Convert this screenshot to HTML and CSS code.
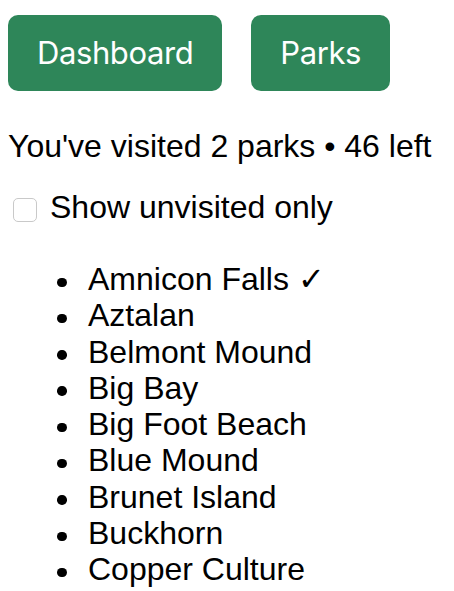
FILE: index.html
```html
<!DOCTYPE html>
<html lang="en">
<head>
<meta charset="utf-8">
<title>Parks</title>
<link rel="stylesheet" href="styles.css">
</head>
<body>
  <nav class="nav">
    <button class="btn" type="button">Dashboard</button>
    <button class="btn" type="button">Parks</button>
  </nav>
  <p class="summary">You've visited 2 parks • 46 left</p>
  <label class="filter"><input class="filter-box" type="checkbox"><span>Show unvisited only</span></label>
  <ul class="parks">
    <li>Amnicon Falls ✓</li>
    <li>Aztalan</li>
    <li>Belmont Mound</li>
    <li>Big Bay</li>
    <li>Big Foot Beach</li>
    <li>Blue Mound</li>
    <li>Brunet Island</li>
    <li>Buckhorn</li>
    <li>Copper Culture</li>
  </ul>
</body>
</html>
```
FILE: styles.css
```css
html, body {
  background: #ffffff;
}
body {
  margin: 8px;
  font-family: "Liberation Sans", Arial, sans-serif;
  font-size: 32px;
  color: #000000;
}
.nav {
  display: flex;
  gap: 29px;
  margin-top: 7px;
}
.btn {
  font-family: Inter, "Liberation Sans", sans-serif;
  font-size: 31px;
  letter-spacing: -0.4px;
  line-height: 38px;
  padding: 19px 29px;
  margin: 0;
  border: none;
  border-radius: 10px;
  background: #2e8659;
  color: #ffffff;
  cursor: pointer;
}
.summary {
  margin: 37px 0 0;
}
.filter {
  display: flex;
  align-items: center;
  margin-top: 24px;
}
.filter-box {
  appearance: none;
  -webkit-appearance: none;
  box-sizing: border-box;
  width: 24px;
  height: 24px;
  margin: 4px 13px 0 5px;
  border: 1px solid #c9c9c9;
  border-radius: 5px;
  background: #ffffff;
}
.parks {
  margin: 35px 0 0;
  padding-left: 80px;
  list-style: none;
  line-height: 36.3px;
}
.parks li::before {
  content: "";
  display: inline-block;
  width: 9.5px;
  height: 9.5px;
  border-radius: 50%;
  background: #000000;
  vertical-align: 3px;
  margin-left: -30.7px;
  margin-right: 21.2px;
}
```
